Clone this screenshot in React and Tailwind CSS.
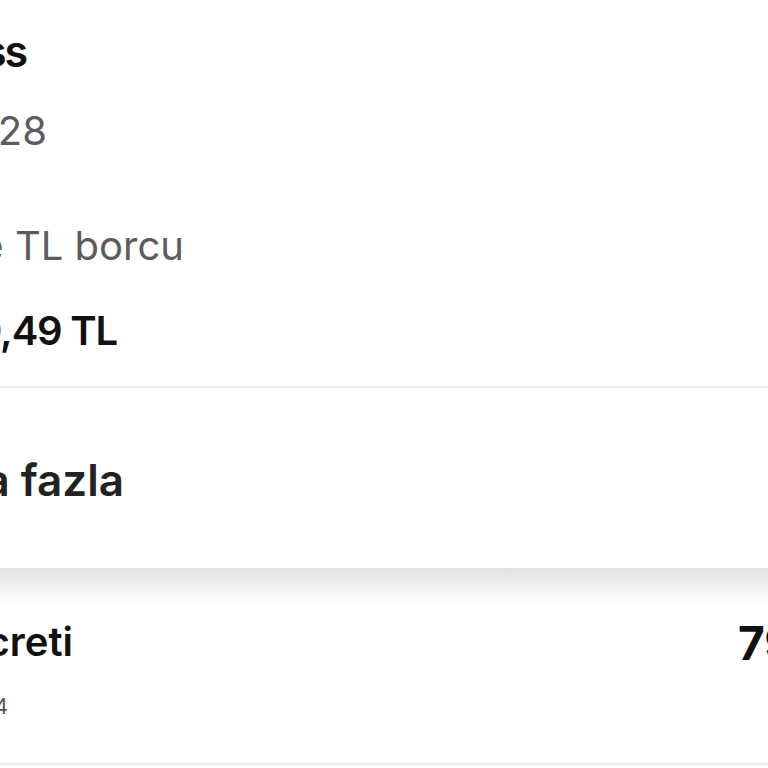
import React from 'react';

// a row whose text ends at a given x; the start runs off the left edge
const Line = ({ end, className, children }) => (
  <div className={`flex justify-end ${end}`}>
    <span className={`whitespace-nowrap leading-none ${className}`}>{children}</span>
  </div>
);

const App = () => {
  return (
    <div className="w-[768px] h-[768px] overflow-hidden bg-white font-['Inter',sans-serif]">
      {/* Hesap özeti */}
      <section className="pt-[30px] pb-[35px] border-b-2 border-[#ebebeb]">
        <Line end="w-[26px]" className="text-[43px] font-semibold tracking-[-0.05em] text-[#111]">Ekspress</Line>
        <Line end="w-[47px] mt-[38px]" className="text-[40px] text-[#5c5c60]">0532 418 42 28</Line>
        <Line end="w-[184px] mt-[75px]" className="text-[40px] text-[#5c5c60]">Fatura tarihine göre TL borcu</Line>
        <Line end="w-[117px] mt-[45px]" className="text-[40px] font-semibold tracking-[-0.03em] text-[#111]">129,49 TL</Line>
      </section>

      <section className="h-[180px] pt-[70px]">
        <Line end="w-[124px]" className="text-[44px] font-semibold text-[#222]">Daha fazla</Line>
      </section>

      <div className="h-[38px] bg-gradient-to-b from-[#e2e2e2] to-white"></div>

      <section className="h-[159px] pt-[14px] border-b-2 border-[#ececec]">
        <div className="flex justify-between items-start">
          <Line end="w-[73px] pt-[2px]" className="text-[40px] font-semibold text-[#111]">Paket ücreti</Line>
          <span className="whitespace-nowrap leading-none text-[46px] font-bold text-[#111] -mr-[60px] w-[90px]">79,99 TL</span>
        </div>
        <Line end="w-[8px] mt-[30px]" className="text-[21px] text-[#555]">30.04.2024</Line>
      </section>
    </div>
  );
};

export default App;
